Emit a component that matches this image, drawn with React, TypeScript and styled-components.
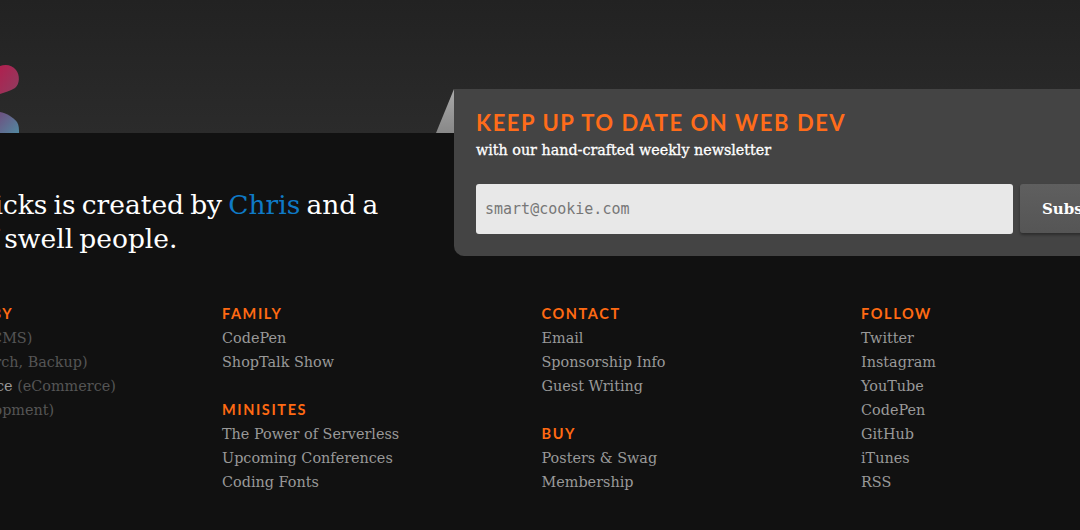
import React, { ReactElement } from 'react';
import styled, { createGlobalStyle } from 'styled-components';

const serif = '"DejaVu Serif", "Liberation Serif", serif';
const sans = 'Lato, "Open Sans", sans-serif';

const Global = createGlobalStyle`
  html, body {
    margin: 0;
    padding: 0;
    width: 1080px;
    height: 530px;
    overflow: hidden;
    background: #111;
  }
`;

const Page = styled.div`
  width: 1080px;
  height: 530px;
  overflow: hidden;
  background: #111;
  font-family: ${serif};
`;

const Hero = styled.div`
  height: 133px;
  background: linear-gradient(#222, #2b2b2b);
`;

const Blob = styled.svg`
  display: block;
  width: 24px;
  height: 133px;
`;

const IntroRow = styled.div`
  display: flex;
  align-items: flex-start;
  margin-top: -44px;
  height: 167px;
`;

const Lead = styled.p`
  flex: none;
  width: 555px;
  margin: 99px 0 0 -101px;
  font-size: 26.5px;
  line-height: 34px;
  word-spacing: -2.3px;
  color: #fff;
  white-space: nowrap;
`;

const LeadLink = styled.a`
  color: #0f7ac6;
`;

const Card = styled.div`
  position: relative;
  flex: none;
  width: 700px;
  height: 167px;
  box-sizing: border-box;
  padding: 20px 0 0 22px;
  background: #444;
  border-radius: 0 0 0 10px;

  &::before {
    content: '';
    position: absolute;
    top: 0;
    left: -18px;
    width: 18px;
    height: 44px;
    background: linear-gradient(#aaa, #888);
    clip-path: polygon(100% 0, 100% 100%, 0 100%);
  }
`;

const CardTitle = styled.h4`
  margin: 0;
  font-family: ${sans};
  font-size: 22px;
  line-height: 28px;
  font-weight: 700;
  letter-spacing: 1.55px;
  color: #ff6c1a;
`;

const CardSub = styled.div`
  margin-top: 3px;
  font-size: 14.3px;
  line-height: 20px;
  font-weight: 400;
  -webkit-text-stroke: 0.3px #fff;
  color: #fff;
`;

const Form = styled.form`
  display: flex;
  gap: 7px;
  margin-top: 24px;
`;

const EmailInput = styled.input`
  flex: none;
  width: 537px;
  height: 50px;
  box-sizing: border-box;
  padding: 0 9px;
  border: 0;
  border-radius: 3px;
  background: #e8e8e8;
  font-family: "DejaVu Sans Mono", monospace;
  font-size: 15px;
  &::placeholder {
    color: #777;
    opacity: 1;
  }
`;

const SubmitButton = styled.button`
  flex: none;
  width: 120px;
  height: 49px;
  padding: 0 0 0 22px;
  text-align: left;
  border: 0;
  border-radius: 3px;
  background: linear-gradient(#5f5f5f, #555);
  box-shadow: 0 2px 3px rgba(0, 0, 0, 0.35);
  font-family: ${serif};
  font-size: 15px;
  font-weight: 700;
  color: #fff;
`;

const Columns = styled.div`
  display: grid;
  grid-template-columns: repeat(4, 319.5px);
  margin: 46px 0 0 -97.5px;
`;

const Section = styled.section`
  & + & {
    margin-top: 24px;
  }
`;

const Heading = styled.h5`
  margin: 0;
  font-family: ${sans};
  font-size: 14.5px;
  line-height: 24px;
  font-weight: 700;
  letter-spacing: 1.6px;
  color: #ff6a13;
`;

const LinkList = styled.ul`
  margin: 0;
  padding: 0;
  list-style: none;
`;

const LinkItem = styled.li`
  font-size: 14.4px;
  line-height: 24px;
  white-space: nowrap;
  color: #999;
`;

const Note = styled.span`
  color: #555;
`;

type Group = { title: string; links: string[] };

const columns: Group[][] = [
  [
    { title: 'FAMILY', links: ['CodePen', 'ShopTalk Show'] },
    {
      title: 'MINISITES',
      links: ['The Power of Serverless', 'Upcoming Conferences', 'Coding Fonts'],
    },
  ],
  [
    { title: 'CONTACT', links: ['Email', 'Sponsorship Info', 'Guest Writing'] },
    { title: 'BUY', links: ['Posters & Swag', 'Membership'] },
  ],
  [
    {
      title: 'FOLLOW',
      links: ['Twitter', 'Instagram', 'YouTube', 'CodePen', 'GitHub', 'iTunes', 'RSS'],
    },
  ],
];

const poweredBy = [
  ['WordPress', '(CMS)'],
  ['Jetpack', '(Search, Backup)'],
  ['WooCommerce', '(eCommerce)'],
  ['Local', '(Development)'],
];

const App = (): ReactElement => (
  <Page>
    <Global />
    <Hero>
      <Blob viewBox="0 0 24 133">
        <defs>
          <linearGradient id="top" x1="0" y1="0" x2="1" y2="1">
            <stop offset="0" stopColor="#b0204f" />
            <stop offset="1" stopColor="#8e3d60" />
          </linearGradient>
          <linearGradient id="low" x1="0" y1="0" x2="1" y2="1">
            <stop offset="0" stopColor="#6d5080" />
            <stop offset="1" stopColor="#5288a0" />
          </linearGradient>
        </defs>
        <path d="M0 66C6 64 12 65 16 70C20 75 20 84 15 88C10 91 5 92 0 94Z" fill="url(#top)" />
        <path d="M0 112C6 113 13 117 17 122C19 125 19 129 19 133H0Z" fill="url(#low)" />
      </Blob>
    </Hero>
    <IntroRow>
      <Lead>
        CSS-Tricks is created by <LeadLink>Chris</LeadLink> and a
        <br />
        team of swell people.
      </Lead>
      <Card>
        <CardTitle>KEEP UP TO DATE ON WEB DEV</CardTitle>
        <CardSub>with our hand-crafted weekly newsletter</CardSub>
        <Form>
          <EmailInput placeholder="smart@cookie.com" />
          <SubmitButton type="button">Subscribe</SubmitButton>
        </Form>
      </Card>
    </IntroRow>
    <Columns>
      <div>
        <Section>
          <Heading>POWERED BY</Heading>
          <LinkList>
            {poweredBy.map(([name, note]) => (
              <LinkItem key={name}>
                {name} <Note>{note}</Note>
              </LinkItem>
            ))}
          </LinkList>
        </Section>
      </div>
      {columns.map((groups) => (
        <div key={groups[0].title}>
          {groups.map((g) => (
            <Section key={g.title}>
              <Heading>{g.title}</Heading>
              <LinkList>
                {g.links.map((l) => (
                  <LinkItem key={l}>{l}</LinkItem>
                ))}
              </LinkList>
            </Section>
          ))}
        </div>
      ))}
    </Columns>
  </Page>
);

export default App;
